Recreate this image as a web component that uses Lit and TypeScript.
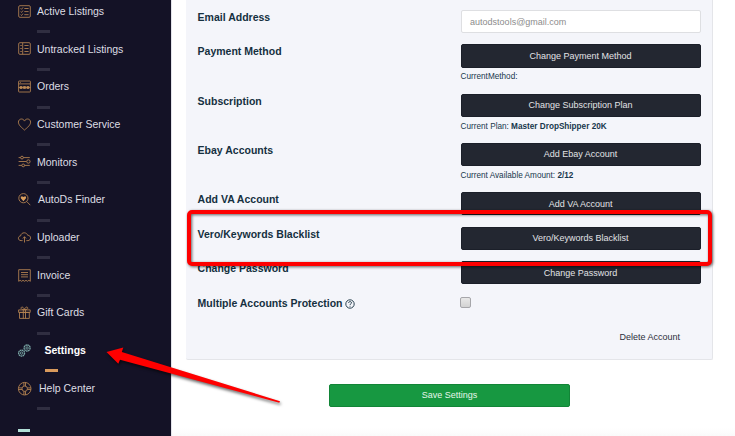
import { LitElement, html, css, svg } from "lit";
import { customElement } from "lit/decorators.js";
import { classMap } from "lit/directives/class-map.js";

const icons = {
  active: svg`<rect x=".7" y=".7" width="11.600" height="11.600" rx="1.200"/><path d="M2.600 3.400l.9.9 1.500-1.900M2.600 6.500l.9.9 1.500-1.900M2.600 9.600l.9.9 1.500-1.900M6.300 3.500h4.300M6.300 6.600h4.300M6.300 9.700h4.300"/>`,
  untracked: svg`<rect x=".7" y=".7" width="11.600" height="11.600" rx="1.200"/><path d="M4.700 .8v11.400M2.300 3.500h1.500M2.300 6.500h1.500M2.300 9.500h1.500M6.400 3.500h4.200M6.400 6.500h4.200M6.400 9.500h4.200"/>`,
  orders: svg`<rect x=".6" y="1" width="11.800" height="11" rx=".6"/><path d="M.6 3.900h11.800M2 2.400h.8"/><path class="solid" d="M1.800 6.300h2.600v2.400H1.800zM5.200 6.300h2.600v2.400H5.200zM8.600 6.300h2.600v2.400H8.600z"/><path d="M.6 7.500h11.800"/>`,
  heart: svg`<path d="M6.500 12C3.500 9.500.4 7 .4 4.100.4 2.300 1.800 1 3.500 1c1.300 0 2.400.8 3 2.100C7.100 1.800 8.200 1 9.500 1c1.700 0 3.100 1.300 3.100 3.100 0 2.900-3.100 5.400-6.100 7.900z"/>`,
  monitors: svg`<path d="M.6 2.600h2M5.400 2.600h6.400M.6 6.500h7.800M.6 10.400h3.200M6.600 10.400h5.200"/><circle cx="4" cy="2.600" r="1.400"/><circle cx="10.400" cy="6.500" r="1.700"/><circle cx="5.200" cy="10.400" r="1.400"/>`,
  finder: svg`<circle cx="5.400" cy="5.200" r="4.600"/><path d="M8.700 8.500l3.600 3.700"/><path class="solid" d="M5.400 8.200L2.800 5.300V3.400h1.900l.7.700.7-.7H8v1.900z"/>`,
  upload: svg`<path d="M4.600 9.600H3.100C1.500 9.600.4 8.600.4 7.200c0-1.300.9-2.200 2.200-2.300C2.900 2.900 4.400 1.800 6.200 1.800c1.700 0 3 1 3.500 2.500 1.700 0 2.900 1.100 2.900 2.600s-1.200 2.700-2.700 2.700H8.400M6.500 11.500V5.800M4.900 7.500l1.600-1.800 1.600 1.800"/>`,
  invoice: svg`<path d="M.7.7h11.600v11.600l-1.400-1-1.500 1-1.400-1-1.500 1-1.500-1-1.400 1-1.500-1-1.400 1zM3 3.500h7M3 5.700h7M3 7.900h7"/>`,
  gift: svg`<path d="M.6 3.900h11.600v2.500H.6zM1.500 6.400h9.800v6H1.500zM5.300 3.900v8.500M7.500 3.900v8.500M6.400 3.700C4 3.700 2.700 2.900 3.100 1.700c.5-1.300 2.700-.6 3.300 2 .6-2.600 2.800-3.300 3.300-2 .4 1.200-.9 2-3.300 2z"/>`,
  gears: svg`<circle class="cog" cx="3.600" cy="9.100" r="3"/><circle cx="3.600" cy="9.100" r="1.200"/><circle class="cog" cx="9.100" cy="4" r="3"/><circle cx="9.100" cy="4" r="1.200"/>`,
  help: svg`<circle cx="6.700" cy="6.700" r="6.300"/><circle cx="6.700" cy="6.700" r="2.700"/><path d="M5.900.5v3.600M7.500.5v3.600M5.900 9.300v3.600M7.500 9.300v3.600M.5 5.900h3.600M.5 7.500h3.600M9.300 5.900h3.600M9.300 7.500h3.600"/>`,
};

type IconName = keyof typeof icons;
interface NavItem { label: string; icon: IconName; shift?: string; active?: boolean }

const nav: NavItem[] = [
  { label: "Active Listings", icon: "active" },
  { label: "Untracked Listings", icon: "untracked" },
  { label: "Orders", icon: "orders" },
  { label: "Customer Service", icon: "heart" },
  { label: "Monitors", icon: "monitors" },
  { label: "AutoDs Finder", icon: "finder", shift: "near" },
  { label: "Uploader", icon: "upload" },
  { label: "Invoice", icon: "invoice" },
  { label: "Gift Cards", icon: "gift" },
  { label: "Settings", icon: "gears", active: true },
  { label: "Help Center", icon: "help", shift: "mid" },
];

@customElement("side-nav")
class SideNav extends LitElement {
  static styles = css`
    :host { display: block; background: #141226; color: #dedee4; overflow: hidden; }
    .item { height: 37.700px; }
    .line { height: 22.400px; display: flex; align-items: center; padding-left: 18px; }
    .icon { width: 13px; height: 13px; margin-right: 6px; flex: none; fill: none; stroke: #b88552; stroke-width: .85; overflow: visible; }
    .icon .solid { fill: #dba05f; stroke: none; }
    .label { white-space: nowrap; }
    .near { padding-left: 1px; }
    .mid { padding-left: 2px; }
    .bar { width: 13px; height: 3px; margin: 7.800px 0 0 37px; background: #302e41; }
    .active .icon { stroke: #79a6a5; }
    .active .cog { stroke-width: 1.300; stroke-dasharray: 1.600 .4; }
    .active .label { font-weight: bold; color: #fff; padding-left: 7.500px; }
    .active .bar { background: #d99a5c; margin-left: 45px; }
    .end { width: 12px; height: 3px; margin: 14px 0 0 18px; background: #b2dfd7; }
  `;
  render() {
    return html`${nav.map((n) => html`
      <div class=${classMap({ item: true, active: !!n.active })}>
        <div class="line">
          <svg class="icon" viewBox="0 0 13 13">${icons[n.icon]}</svg>
          <span class="label ${n.shift ?? ""}">${n.label}</span>
        </div>
        <div class="bar"></div>
      </div>`)}<div class="end"></div>`;
  }
}

@customElement("settings-form")
class SettingsForm extends LitElement {
  static styles = css`
    :host { display: block; box-sizing: border-box; height: 360px; width: 527px; padding: 10px 12px 0 11.600px;
      background: #f4f5fa; border: solid #e4e5e9; border-width: 0 1px 1px 0; border-radius: 0 0 2px 2px; color: #17374c; }
    .row { display: grid; grid-template-columns: 263px 240px; align-content: start; align-items: start; }
    .h34 { height: 34px; } .h50 { height: 50px; } .h49 { height: 49px; } .h35 { height: 35px; } .h36 { height: 36px; }
    .name { font-weight: bold; line-height: 15px; color: #15303f; display: flex; align-items: center; }
    .field { box-sizing: border-box; height: 23px; border: 1px solid #dedfe2; border-radius: 2px; background: #fff; color: #8c8c8c;
      font-size: 9px; line-height: 22px; padding-left: 8.500px; }
    .button { box-sizing: border-box; height: 23px; border: 1px solid #1b1f29; border-radius: 2px; background: #232731;
      color: #e2e3e6; font-size: 9px; text-align: center; line-height: 21px; }
    .tall { height: 24px; line-height: 22px; }
    .low-text { line-height: 23px; }
    .note { font-size: 8.200px; line-height: 12px; margin-top: 4px; }
    .tall + .note { margin-top: 3px; }
    .check { box-sizing: border-box; width: 11px; height: 11px; margin-left: -1px; border: 1px solid #a6a6aa; border-radius: 2px; background: linear-gradient(#e8e8e8, #d2d2d2); }
    .low { line-height: 13px; }
    .help { width: 10px; height: 10px; margin-left: 2.500px; fill: none; stroke: #15303f; stroke-width: .9; }
    .delete { font-size: 9px; color: #2c2f3b; text-align: right; padding-right: 20px; margin-top: 21px; line-height: 12px; }
  `;
  row(h: string, label: string, button: string, note: unknown = "", look = "") {
    return html`<div class="row ${h}"><div class="name">${label}</div>
      <div><div class="button ${look}">${button}</div>${note ? html`<div class="note">${note}</div>` : ""}</div></div>`;
  }
  render() {
    return html`
      <div class="row h34"><div class="name">Email Address</div><div class="field">autodstools@gmail.com</div></div>
      ${this.row("h50", "Payment Method", "Change Payment Method", "CurrentMethod:", "tall")}
      ${this.row("h49", "Subscription", "Change Subscription Plan", html`Current Plan: <b>Master DropShipper 20K</b>`)}
      ${this.row("h49", "Ebay Accounts", "Add Ebay Account", html`Current Available Amount: <b>2/12</b>`)}
      ${this.row("h35", "Add VA Account", "Add VA Account", "", "low-text")}
      ${this.row("h34", "Vero/Keywords Blacklist", "Vero/Keywords Blacklist")}
      ${this.row("h36", "Change Password", "Change Password", "", "low-text")}
      <div class="row">
        <div class="name low">Multiple Accounts Protection
          <svg class="help" viewBox="0 0 10 10"><circle cx="5" cy="5" r="4.200"/><path d="M3.600 4c0-1.900 2.900-1.800 2.900-.2C6.500 4.900 5 4.800 5 6M5 6.800v.9"/></svg>
        </div><div class="check"></div>
      </div>
      <div class="delete">Delete Account</div>`;
  }
}

@customElement("app-root")
class AppRoot extends LitElement {
  static styles = css`
    :host { display: grid; grid-template-columns: 171px 1fr; position: relative; width: 735px; height: 436px; overflow: hidden;
      background: #fff; font: 10.500px/1.200 "Liberation Sans", Arial, sans-serif; }
    .main { border-left: 1px solid #e3e3ea; box-sizing: border-box; background: linear-gradient(#fff 428px, #fafafa 436px); }
    .form { margin-left: 14px; }
    .save { box-sizing: border-box; width: 241px; height: 23px; margin: 24px 0 0 157px; border: 1px solid #128537; border-radius: 2px;
      background: #179841; color: #e6f5ea; font-size: 9px; line-height: 21px; text-align: center; }
    .frame { position: absolute; left: 187px; top: 210px; width: 525px; height: 56px; box-sizing: border-box; border: 4px solid #fe0000; border-radius: 5px;
      filter: drop-shadow(1px 1px 1.500px rgba(0, 0, 0, .6)); }
    .arrow { position: absolute; left: 100px; top: 340px; width: 190px; height: 75px; fill: #fe0000; overflow: visible;
      filter: drop-shadow(1px 2px 1.500px rgba(0, 0, 0, .6)); }
  `;
  render() {
    return html`
      <side-nav></side-nav>
      <div class="main">
        <settings-form class="form"></settings-form>
        <div class="save">Save Settings</div>
      </div>
      <div class="frame"></div>
      <svg class="arrow" viewBox="100 340 190 75"><path d="M106.500 352L123.300 347.600 121.800 352 280 401.200 279.300 402.800 120 359.800 118.300 363.800z"/></svg>`;
  }
}
